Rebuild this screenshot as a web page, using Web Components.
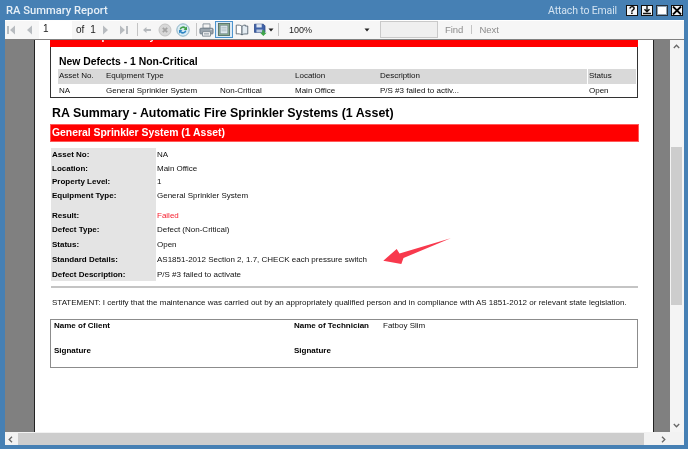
<!DOCTYPE html>
<html>
<head>
<meta charset="utf-8">
<title>RA Summary Report</title>
<style>
  html, body { margin: 0; padding: 0; width: 688px; height: 449px; overflow: hidden; background: #4680b4; }
  body { font-family: "Liberation Sans", Arial, sans-serif; }
</style>
</head>
<body>
<report-window>
  <title-bar slot="title" heading="RA Summary Report"></title-bar>
  <viewer-toolbar slot="toolbar"></viewer-toolbar>
  <report-page slot="page"></report-page>
</report-window>

<script>
// TITLE BAR

class TitleBar extends HTMLElement {
  constructor() {
    super();
    const shadow = this.attachShadow({ mode: "open" });
    shadow.innerHTML = `
      <style>
        :host { display: flex; align-items: center; height: 20px; padding: 0 5px 0 6px; color: #e6eff7; font: 500 11.200px Roboto, sans-serif; }
        .name { flex: 1; }
        .mail { font-weight: 400; color: #d3e3f1; margin-right: 6px; font-size: 10.500px; letter-spacing: -0.150px; }
        .btn { box-sizing: border-box; width: 12px; height: 11px; margin-left: 3px; border: 1px solid #111; background: #f4f6f8; display: flex; align-items: center; justify-content: center; color: #000; font: 700 11px/9px "Liberation Sans", sans-serif; }
        svg { display: block; }
      </style>
      <span class="name"></span>
      <span class="mail">Attach to Email</span>
      <span class="btn">?</span>
      <span class="btn"><svg width="10" height="9" viewBox="0 0 10 9"><path d="M5 0v5M2.500 3.200 5 5.800l2.500-2.600" fill="none" stroke="#111" stroke-width="1.400"/><path d="M1 7.500h8" stroke="#111" stroke-width="1.500"/></svg></span>
      <span class="btn" style="background:#fff;border-color:#26303a;box-shadow:inset 0 0 0 1px #8fa3b5"></span>
      <span class="btn"><svg width="10" height="9" viewBox="0 0 10 9"><path d="M1 .5 9 8.500M9 .5 1 8.500" stroke="#000" stroke-width="1.800"/></svg></span>
    `;
    shadow.querySelector(".name").textContent = this.getAttribute("heading");
  }
}
customElements.define("title-bar", TitleBar);

// TOOLBAR

const TOOL_ICONS = {
  first: `<svg width="12" height="12" viewBox="0 0 12 12"><path d="M2 2h2v8H2zM10 1.500v9L5 6z" fill="#b8bcc0"/></svg>`,
  prev: `<svg width="12" height="12" viewBox="0 0 12 12"><path d="M9 1.500v9L4 6z" fill="#b8bcc0"/></svg>`,
  next: `<svg width="12" height="12" viewBox="0 0 12 12"><path d="M3 1.500v9L8 6z" fill="#b8bcc0"/></svg>`,
  last: `<svg width="12" height="12" viewBox="0 0 12 12"><path d="M2 1.500v9L7 6zM8 2h2v8H8z" fill="#b8bcc0"/></svg>`,
  back: `<svg width="12" height="12" viewBox="0 0 12 12"><path d="M1 6l3.500-3V5H9v2H4.500v2z" fill="#b4b8bc"/></svg>`,
  stop: `<svg width="14" height="14" viewBox="0 0 14 14"><circle cx="7" cy="7" r="6" fill="#d8d8d8" stroke="#c4c4c4"/><path d="M4.800 4.800l4.400 4.400M9.200 4.800 4.800 9.200" stroke="#a4a4a4" stroke-width="1.800"/></svg>`,
  refresh: `<svg width="14" height="14" viewBox="0 0 14 14"><circle cx="7" cy="7" r="6.200" fill="#d9ecf5" stroke="#8bb1c4"/><path d="M3.500 6.200A3.600 3.600 0 0 1 9.800 4.600L11 3.400v3.500H7.600l1.200-1.200a2.200 2.200 0 0 0-3.800.8z" fill="#3f9f4a"/><path d="M10.500 7.800A3.600 3.600 0 0 1 4.200 9.400L3 10.600V7.100h3.400L5.200 8.300a2.200 2.200 0 0 0 3.800-.8z" fill="#2f86c4"/></svg>`,
  print: `<svg width="15" height="14" viewBox="0 0 17 16"><path d="M4.500 1h8v5h-8z" fill="#f4f4f4" stroke="#7e8a94"/><rect x="1" y="6" width="15" height="6.500" rx="1" fill="#9aa5ae" stroke="#6c7883"/><path d="M4 10h9v5H4z" fill="#fff" stroke="#76828c"/><path d="M5.500 12h6M5.500 13.500h6" stroke="#a4adb4"/><path d="M13 7.500h1.500" stroke="#e7ecf0"/></svg>`,
  layout: `<svg width="12" height="13" viewBox="0 0 14 15"><rect x=".5" y=".5" width="13" height="14" fill="#8cae8e" stroke="#4f6b63"/><rect x="2.500" y="2.500" width="9" height="10" fill="#dfe9ee" stroke="#7c8f96"/><path d="M4 5h6M4 7h6M4 9h6" stroke="#a8b8c0"/></svg>`,
  book: `<svg width="14" height="12" viewBox="0 0 17 14"><path d="M8.500 2.500C7 1 4 .8 1.500 1.200v10.600c2.500-.4 5.500-.2 7 1.200z" fill="#fff" stroke="#4d5a66"/><path d="M8.500 2.500c1-1 2.500-1.500 4-1.600v1.300h3v9.600h-3.500c-1.500 0-2.600.4-3.500 1.200z" fill="#e4ecf2" stroke="#4d5a66"/></svg>`,
  save: `<svg width="13" height="13" viewBox="0 0 16 16"><path d="M.5 1.500h11l2 2v8h-13z" fill="#3f62a8" stroke="#2b4684"/><path d="M3 1.500h6.500v4H3z" fill="#dfe7f3"/><path d="M3 8h7.500v3.500H3z" fill="#b9c8e0"/><path d="M10 9h3v3h2.500l-4 4-4-4H10z" fill="#3fa648"/></svg>`,
  caret: `<svg width="6" height="4" viewBox="0 0 6 4"><path d="M.5.500h5L3 3.500z" fill="#222"/></svg>`,
};

class ViewerToolbar extends HTMLElement {
  constructor() {
    super();
    const icon = (name, left) => `<span class="ico" style="margin-left:${left}px">${TOOL_ICONS[name]}</span>`;
    const sep = (left) => `<span class="sep" style="margin-left:${left}px"></span>`;
    const shadow = this.attachShadow({ mode: "open" });
    shadow.innerHTML = `
      <style>
        :host { display: flex; align-items: center; height: 19px; background: #f6f6f6; color: #222; font: 10px "Liberation Sans", sans-serif; box-shadow: inset 0 1px 0 #fff; }
        .ico { display: flex; align-items: center; justify-content: center; flex: none; }
        .sep { flex: none; width: 1px; height: 13px; background: #c4c4c4; }
        .page { flex: none; width: 33px; height: 19px; margin-left: 4px; box-sizing: border-box; padding: 3px 0 0 4px; background: #fff; color: #222; }
        .sel { flex: none; margin-left: 1px; width: 18px; height: 17px; box-sizing: border-box; border: 1px solid #4c94cf; background: #dceaf5; display: flex; align-items: center; justify-content: center; }
        .txt { flex: none; }
        .zoom { flex: none; margin-left: 10px; width: 73px; color: #222; font-size: 9px; }
        .find { flex: none; box-sizing: border-box; width: 58px; height: 17px; margin-left: 10px; border: 1px solid #c9c9c9; background: #efefef; }
        .off { flex: none; color: #8c8c8c; font-size: 9.500px; }
      </style>
      ${icon("first", 0)}
      ${icon("prev", 6)}
      <span class="page">1</span>
      <span class="txt" style="margin-left:4px">of</span>
      <span class="txt" style="margin-left:6px">1</span>
      ${icon("next", 4)}
      ${icon("last", 6)}
      ${sep(7)}
      ${icon("back", 4)}
      ${icon("stop", 4)}
      ${icon("refresh", 4)}
      ${sep(6)}
      ${icon("print", 2)}
      <span class="sel">${TOOL_ICONS.layout}</span>
      ${icon("book", 2)}
      ${icon("save", 5)}
      ${icon("caret", 1)}
      ${sep(4)}
      <span class="zoom">100%</span>
      ${icon("caret", 2)}
      <span class="find"></span>
      <span class="off" style="margin-left:7px">Find</span>
      <span class="sep" style="margin-left:8px;height:9px"></span>
      <span class="off" style="margin-left:7px">Next</span>
    `;
  }
}
customElements.define("viewer-toolbar", ViewerToolbar);

// REPORT PAGE

class DefectTable extends HTMLElement {
  constructor() {
    super();
    const shadow = this.attachShadow({ mode: "open" });
    shadow.innerHTML = `
      <style>
        :host { display: block; box-sizing: border-box; height: 51px; border: solid #333; border-width: 0 1px 1px 1px; padding: 0 1px 0 7px; color: #111; font-size: var(--small); }
        h3 { margin: 0; height: 22px; padding: 7px 0 0 1px; box-sizing: border-box; font: 700 10.400px/15px "Liberation Sans", sans-serif; color: #000; }
        .row { display: grid; grid-template-columns: 47px 114px 75px 85px 209px 1fr; height: 14px; line-height: 13px; }
        .row span { padding-left: 1px; white-space: nowrap; }
        .head { background: linear-gradient(90deg, #d9d9d9 529px, #fff 529px, #fff 530px, #d9d9d9 530px); height: 15px; line-height: 14px; }
      </style>
      <h3>New Defects  - 1 Non-Critical</h3>
      <div class="row head"><span>Asset No.</span><span>Equipment Type</span><span></span><span>Location</span><span>Description</span><span>Status</span></div>
      <div class="row"><span>NA</span><span>General Sprinkler System</span><span>Non-Critical</span><span>Main Office</span><span>P/S #3 failed to activ...</span><span>Open</span></div>
    `;
  }
}
customElements.define("defect-table", DefectTable);

class AssetDetails extends HTMLElement {
  constructor() {
    super();
    const rows = [
      ["Asset No:", "NA", 13],
      ["Location:", "Main Office", 14],
      ["Property Level:", "1", 13],
      ["Equipment Type:", "General Sprinkler System", 14],
      ["Result:", "Failed", 20, "bad"],
      ["Defect Type:", "Defect (Non-Critical)", 14],
      ["Status:", "Open", 15],
      ["Standard Details:", "AS1851-2012 Section 2, 1.7, CHECK each pressure switch", 15],
      ["Defect Description:", "P/S #3 failed to activate", 15],
    ];
    const shadow = this.attachShadow({ mode: "open" });
    shadow.innerHTML = `
      <style>
        :host { display: grid; grid-template-columns: 105px 1fr; margin: 6px 0 0 1px; font-size: var(--small); color: #111; }
        b, span { display: flex; align-items: flex-end; padding-bottom: 2px; box-sizing: border-box; white-space: nowrap; }
        b { background: #e4e4e4; padding-left: 1px; color: #000; }
        span { padding-left: 1px; }
        .bad { color: #f5202f; }
      </style>
      ${rows.map(([label, value, height, cls]) => `<b style="height:${height}px">${label}</b><span class="${cls || ""}" style="height:${height}px">${value}</span>`).join("")}
    `;
  }
}
customElements.define("asset-details", AssetDetails);

class SignBox extends HTMLElement {
  constructor() {
    super();
    const shadow = this.attachShadow({ mode: "open" });
    shadow.innerHTML = `
      <style>
        :host { display: grid; grid-template-columns: 240px 89px 1fr; grid-template-rows: 25px 1fr; box-sizing: border-box; height: 49px; margin-top: 10px; border: 1px solid #8c8c8c; padding: 1px 3px 0; font-size: var(--small); color: #111; }
        b { color: #000; }
        .sig { grid-row: 2; }
      </style>
      <b>Name of Client</b><b>Name of Technician</b><span>Fatboy Slim</span>
      <b class="sig">Signature</b><b class="sig">Signature</b>
    `;
  }
}
customElements.define("sign-box", SignBox);

class ReportPage extends HTMLElement {
  constructor() {
    super();
    const shadow = this.attachShadow({ mode: "open" });
    shadow.innerHTML = `
      <style>
        :host { display: block; position: relative; --small: 8px; width: 618px; height: 392px; box-sizing: border-box; padding: 0 15px; background: #fff; overflow: hidden; font-family: "Liberation Sans", sans-serif; }
        .clip { height: 7px; background: #f00; overflow: hidden; color: #fff; font: 700 10.400px/12px "Liberation Sans", sans-serif; padding-left: 3px; }
        .clip span { display: block; margin-top: -9px; }
        h1 { margin: 6px 0 0 2px; height: 20px; font: 700 12.400px/18px "Liberation Sans", sans-serif; color: #000; }
        .band { box-sizing: border-box; width: 589px; height: 18px; padding: 0 2px; background: #f00; box-shadow: inset 0 0 0 1px #ff5a5a; color: #fff; font: 700 10.400px/18px "Liberation Sans", sans-serif; }
        .rule { height: 2px; margin: 5px 0 0 1px; background: #c4c4c4; }
        .stmt { margin: 8px 0 0 2px; height: 13px; line-height: 13px; font-size: var(--small); color: #111; white-space: nowrap; }
        svg { position: absolute; left: 0; top: 0; pointer-events: none; }
      </style>
      <div class="clip"><span>General Sprinkler System</span></div>
      <defect-table></defect-table>
      <h1>RA Summary - Automatic Fire Sprinkler Systems (1 Asset)</h1>
      <div class="band">General Sprinkler System (1 Asset)</div>
      <asset-details></asset-details>
      <div class="rule"></div>
      <div class="stmt">STATEMENT: I certify that the maintenance was carried out by an appropriately qualified person and in compliance with AS 1851-2012 or relevant state legislation.</div>
      <sign-box></sign-box>
      <svg width="618" height="392" viewBox="35 40 618 392"><path d="M383.300 260.700 396.700 249 399.500 253.500 450.700 238.300 403.500 258 401.300 264z" fill="#f8394d"/></svg>
    `;
  }
}
customElements.define("report-page", ReportPage);

// WINDOW

class ReportWindow extends HTMLElement {
  constructor() {
    super();
    const shadow = this.attachShadow({ mode: "open" });
    shadow.innerHTML = `
      <style>
        :host { display: block; width: 688px; height: 449px; background: #4680b4; font-family: "Liberation Sans", sans-serif; filter: blur(0.2px); }
        .body { margin: 0 4px 0 5px; }
        .view { display: flex; height: 392px; background: #808080; border-top: 1px solid transparent; }
        .gut-l { flex: none; width: 29px; border-right: 1px solid #222; }
        .gut-r { flex: none; width: 16px; border-left: 1px solid #222; }
        .vbar { flex: none; width: 14px; box-sizing: border-box; padding: 0 2px 0 1px; background: #f4f4f4; position: relative; display: flex; flex-direction: column; }
        .vbar i { display: block; flex: none; background: #cdcdcd; height: 158px; margin-top: 107px; }
        .hbar { display: flex; align-items: center; height: 13px; background: #f2f2f2; }
        .hbar i { display: block; width: 626px; height: 12px; margin-left: 13px; background: #cdcdcd; }
        .arr { position: absolute; display: block; }
      </style>
      <slot name="title"></slot>
      <div class="body">
        <slot name="toolbar"></slot>
        <div class="view">
          <div class="gut-l"></div>
          <slot name="page"></slot>
          <div class="gut-r"></div>
          <div class="vbar">
            <svg class="arr" style="left:3px;top:4px" width="7" height="5" viewBox="0 0 7 5"><path d="M.8 4 3.500 1.200 6.200 4" fill="none" stroke="#666" stroke-width="1.300"/></svg>
            <i></i>
            <svg class="arr" style="left:3px;bottom:4px" width="7" height="5" viewBox="0 0 7 5"><path d="M.8 1 3.500 3.800 6.200 1" fill="none" stroke="#666" stroke-width="1.300"/></svg>
          </div>
        </div>
        <div class="hbar" style="position:relative">
          <i></i>
          <svg class="arr" style="left:3px;top:4px" width="5" height="7" viewBox="0 0 5 7"><path d="M4 .8 1.200 3.500 4 6.200" fill="none" stroke="#666" stroke-width="1.300"/></svg>
          <svg class="arr" style="left:656px;top:4px" width="5" height="7" viewBox="0 0 5 7"><path d="M1 .8 3.800 3.500 1 6.200" fill="none" stroke="#666" stroke-width="1.300"/></svg>
        </div>
      </div>
    `;
  }
}
customElements.define("report-window", ReportWindow);
</script>
</body>
</html>
